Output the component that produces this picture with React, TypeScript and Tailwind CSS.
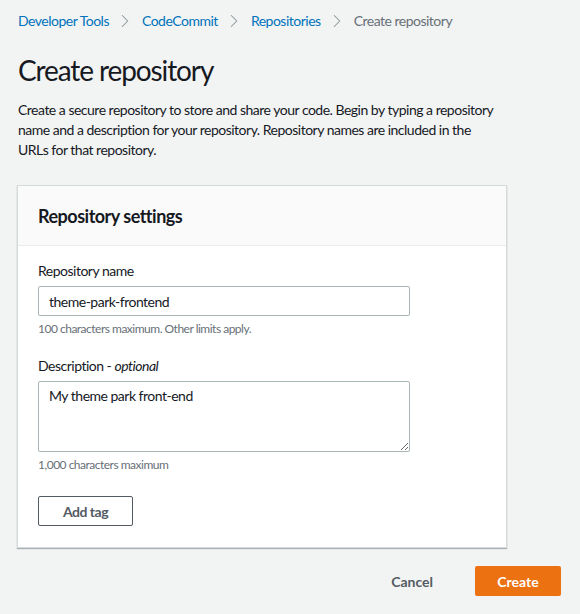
import { ChevronRight } from 'lucide-react'

const crumbs = ['Developer Tools', 'CodeCommit', 'Repositories']

export default function App() {
  return (
    <div className="min-h-[614px] w-[580px] bg-[#f2f3f3] font-['Lato','Noto_Sans',sans-serif] tracking-[-0.5px] text-[#16191f]">
      <div className="px-[18px] pt-[10px]">
        {/* Breadcrumbs */}
        <nav className="flex items-center text-[14px] leading-[20px]">
          {crumbs.map((c) => (
            <span key={c} className="flex items-center">
              <a className="text-[#0073bb]">{c}</a>
              <span className="w-[33px] flex justify-center">
                <ChevronRight size={22} strokeWidth={1.1} className="text-[#879596]" />
              </span>
            </span>
          ))}
          <span className="text-[#687078]">Create repository</span>
        </nav>

        {/* Header */}
        <h1 className="mt-[20px] text-[28px] leading-[36px] font-normal tracking-[-1.1px]">Create repository</h1>
        <p className="mt-[12px] text-[14px] leading-[20px]">
          Create a secure repository to store and share your code. Begin by typing a repository
          <br />
          name and a description for your repository. Repository names are included in the
          <br />
          URLs for that repository.
        </p>

        {/* Settings card */}
        <section className="mt-[25px] w-[490px] -ml-[1px] bg-white border border-[#d5dbdb] shadow-[0_1px_1px_0_rgba(0,28,36,0.3)]">
          <div className="h-[60px] flex items-center px-[20px] bg-[#fafafa] border-b border-[#eaeded]">
            <h2 className="text-[18px] font-bold leading-[24px]">Repository settings</h2>
          </div>
          <div className="px-[20px] pt-[15px] pb-[21px]">
            <label className="block text-[14px] leading-[20px]">Repository name</label>
            <input
              defaultValue="theme-park-frontend"
              className="mt-[5px] block w-[372px] h-[30px] px-[10px] text-[14px] tracking-[-0.5px] border border-[#aab7b8] rounded-[2px] outline-none"
            />
            <p className="mt-[4px] text-[12px] leading-[18px] text-[#687078]">100 characters maximum. Other limits apply.</p>

            <label className="mt-[18px] block text-[14px] leading-[20px]">
              Description - <i>optional</i>
            </label>
            <textarea
              defaultValue="My theme park front-end"
              className="mt-[5px] block w-[372px] h-[71px] px-[10px] py-[4px] text-[14px] leading-[20px] tracking-[-0.5px] border border-[#aab7b8] rounded-[2px] outline-none resize-y"
            />
            <p className="mt-[4px] text-[12px] leading-[18px] text-[#687078]">1,000 characters maximum</p>

            <button className="mt-[22px] h-[30px] w-[95px] border border-[#545b64] rounded-[2px] text-[14px] font-bold text-[#545b64] bg-white">
              Add tag
            </button>
          </div>
        </section>

        {/* Actions */}
        <div className="mt-[18px] w-[543px] flex items-center justify-end gap-[22px]">
          <button className="h-[30px] px-[20px] text-[14px] font-bold text-[#545b64] tracking-[0px]">Cancel</button>
          <button className="h-[30px] w-[86px] rounded-[2px] bg-[#ec7211] text-[14px] font-bold text-white tracking-[0px]">Create</button>
        </div>
      </div>
    </div>
  )
}
